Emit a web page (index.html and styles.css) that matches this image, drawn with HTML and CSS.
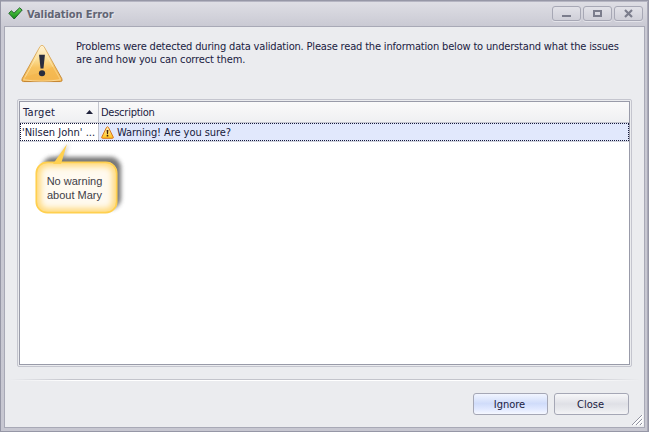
FILE: index.html
```html
<!DOCTYPE html>
<html lang="en">
<head>
<meta charset="utf-8">
<title>Validation Error</title>
<link rel="stylesheet" href="styles.css">
</head>
<body>
<div class="window">
  <header class="titlebar">
    <svg class="check" width="15" height="13" viewBox="0 0 15 13">
      <defs><linearGradient id="green" x2="0" y2="1"><stop offset="0" stop-color="#65d552"/><stop offset="1" stop-color="#118a16"/></linearGradient></defs>
      <path d="M.8 6.300 3.400 3.800 6 6.200 11.600.8 14.200 3 6.200 12Z" fill="url(#green)" stroke="#20632a" stroke-width="1" stroke-linejoin="round"/>
    </svg>
    <h1 class="title">Validation Error</h1>
    <div class="controls">
      <span class="control"><svg width="27" height="13"><path d="M9 8h9v2H9z" fill="#7b7d8c"/></svg></span>
      <span class="control"><svg width="27" height="13"><path d="M10 4h7v5h-7z" fill="none" stroke="#7b7d8c" stroke-width="2"/></svg></span>
      <span class="control"><svg width="27" height="13"><path d="m10 3 7 7m0-7-7 7" fill="none" stroke="#7b7d8c" stroke-width="2.200"/></svg></span>
    </div>
  </header>
  <main class="panel">
    <section class="message">
      <svg class="alert" width="44" height="40" viewBox="0 0 44 41">
        <defs>
          <linearGradient id="amber" x2="0" y2="1"><stop offset="0" stop-color="#fff6df"/><stop offset=".4" stop-color="#fbdd93"/><stop offset=".62" stop-color="#f7c360"/><stop offset="1" stop-color="#f4b956"/></linearGradient>
          <linearGradient id="rim" x2="0" y2="1"><stop offset="0" stop-color="#e3b86f"/><stop offset="1" stop-color="#c2812b"/></linearGradient>
        </defs>
        <path d="M20 2.500Q22 0 24 2.500L42.300 35.500Q43.500 38.300 41 38.500H3Q.5 38.300 1.700 35.500Z" fill="url(#amber)" stroke="url(#rim)"/>
        <path d="M22 3.200 40.800 36.500Q22 40 3.200 36.500Z" fill="none" stroke="#ffeab9" stroke-opacity=".65"/>
        <path d="M3 34Q16 31 34 23L41 36.500H2Z" fill="#f3ae40" fill-opacity=".35"/>
        <path d="M19 11h6l-1.500 14h-3Z" fill="#292d3e"/><ellipse cx="22" cy="30" rx="3.200" ry="3" fill="#292d3e"/>
      </svg>
      <p class="message-text"><span class="line first">Problems were detected during data validation. Please read the information below to understand what the issues</span><span class="line second">are and how you can correct them.</span></p>
    </section>
    <section class="grid-frame">
      <div class="grid">
        <div class="row head">
          <div class="cell target"><span class="t-target">Target</span><svg class="sort" width="7" height="4"><path d="M3.500 0 7 4H0Z" fill="#20223b"/></svg></div>
          <div class="cell"><span class="t-desc">Description</span></div>
        </div>
        <div class="row record">
          <div class="cell target"><span class="t-name">'Nilsen John' ...</span></div>
          <div class="cell selected">
            <svg class="small-alert" width="13" height="13" viewBox="0 0 13 13"><defs><linearGradient id="gold" x2="0" y2="1"><stop offset="0" stop-color="#fff4b0"/><stop offset="1" stop-color="#ffc21a"/></linearGradient></defs><path d="M6.500.8Q7.200.8 7.600 1.700L12.200 11Q12.600 12.300 11.500 12.300H1.500Q.4 12.300.8 11L5.400 1.700Q5.800.8 6.500.8Z" fill="url(#gold)" stroke="#d9731c"/><path d="M5.600 4h1.800l-.4 4.200H6Z M5.700 9h1.600v1.600H5.700Z" fill="#43200e"/></svg>
            <span class="t-warn">Warning! Are you sure?</span>
          </div>
          <svg class="focus" width="609" height="18"><path d="M0 .5h609M0 17.500h609M.5 1v17M608.500 1v17" fill="none" stroke="#17193a" stroke-dasharray="1 1"/></svg>
        </div>
      </div>
    </section>
    <div class="separator"></div>
    <footer class="actions">
      <button class="button primary"><span class="t-ignore">Ignore</span></button>
      <button class="button"><span class="t-close">Close</span></button>
    </footer>
    <svg class="grip" width="12" height="12"><path d="M1 11 11 1M5 11l6-6M9 11l2-2" stroke="#fff" stroke-width="2"/><path d="M0 11 10 1M4 11l6-6M8 11l2-2" stroke="#9092a0" stroke-width="1"/></svg>
  </main>
  <div class="callout">
    <svg width="100" height="88" viewBox="0 0 100 88">
      <defs>
        <filter id="soft" x="-20%" y="-20%" width="140%" height="140%"><feGaussianBlur stdDeviation="1.900"/></filter>
        <filter id="glow"><feGaussianBlur stdDeviation="3"/></filter>
        <clipPath id="bubble"><rect x="6" y="23" width="81" height="51" rx="11"/></clipPath>
      </defs>
      <rect x="12" y="18" width="79" height="52" rx="11" fill="#555" opacity=".8" filter="url(#soft)"/>
      <path d="M25 22 39 4 33 23Z" fill="#777" opacity=".5" filter="url(#soft)"/>
      <rect x="6" y="23" width="81" height="51" rx="11" fill="#fffaf0"/>
      <g clip-path="url(#bubble)"><rect x="6" y="23" width="81" height="51" rx="11" fill="none" stroke="#ffd877" stroke-width="9" filter="url(#glow)"/></g>
      <rect x="6.300" y="23.300" width="80.400" height="50.400" rx="11" fill="none" stroke="#ffd04f" stroke-width="1.700"/>
      <path d="M23 25 37 5 31 25Z" fill="#ffd04f"/>
    </svg>
    <div class="callout-text"><span class="c-one">No warning</span><span class="c-two">about Mary</span></div>
  </div>
</div>
</body>
</html>
```
FILE: styles.css
```css
* { box-sizing: border-box; }
body { margin: 0; font: 11px/13px "DejaVu Sans Condensed", "DejaVu Sans", sans-serif; font-stretch: condensed; color: #20213f; }
.window { position: relative; width: 649px; height: 432px; padding: 0 3px 3px; border: 1px solid #9697a6; background: linear-gradient(#dfdfe5 0, #c9c9d3 26px, #c7c7d1 100%); box-shadow: inset 0 1px #b5b5c2, inset -1px 0 #a9a9b7; }
.titlebar { display: flex; align-items: flex-start; height: 25px; padding: 5px 2px 0 4px; }
.check { margin-top: 1px; }
.title { margin: 2px 0 0 4px; font: bold 11px/14px "DejaVu Sans Condensed", "DejaVu Sans", sans-serif; font-stretch: condensed; color: #626574; text-shadow: 1px 1px #e8e8ee; white-space: nowrap; letter-spacing: -.08px; }
.controls { display: flex; gap: 2px; margin-left: auto; }
.control { width: 29px; height: 15px; border: 1px solid #a7a8b5; border-radius: 3px; background: linear-gradient(#e2e2e8, #cfcfd8); box-shadow: 0 1px #e3e3e9; }
.control svg { display: block; }
.panel { position: relative; width: 641px; height: 402px; padding: 0 12px; border: 1px solid #a8a9b6; background: #ebecef; }
.message { display: flex; height: 72px; padding: 13px 0 0 3px; }
.alert { flex: none; margin-top: 4px; }
.message-text { margin: 0 0 0 12px; }
.line { display: block; white-space: nowrap; letter-spacing: -.172px; }
.second { letter-spacing: -.13px; }
.grid-frame { width: 615px; height: 268px; padding: 1px; border: 1px solid #c4c5ce; border-radius: 2px; }
.grid { width: 611px; height: 264px; border: 1px solid #999ba9; background: #fff; }
.row { display: grid; grid-template-columns: 79px 1fr; }
.head { height: 21px; background: linear-gradient(#fafafa, #eff0f2); border-bottom: 1px solid #c4c6cf; }
.cell { display: flex; align-items: center; padding-left: 2px; white-space: nowrap; }
.target { border-right: 1px solid #c4c6cf; justify-content: space-between; padding-right: 5px; }
.t-target { margin-left: 1px; letter-spacing: .3px; }
.t-desc { letter-spacing: -.25px; }
.t-warn { letter-spacing: -.07px; }
.record { position: relative; height: 19px; border-bottom: 1px solid #d2d5de; color: #17193a; }
.record .target { padding-right: 0; }
.selected { background: #e1e8fc; gap: 3px; padding-left: 3px; }
.small-alert { margin-left: -1px; }
.focus { position: absolute; inset: 0; }
.separator { height: 2px; margin: 12px -8px 0; background: linear-gradient(90deg, transparent, #c3c4cb 10%, #c3c4cb 90%, transparent) top / 100% 1px no-repeat, linear-gradient(90deg, transparent, #fff 10%, #fff 90%, transparent) bottom / 100% 1px no-repeat; }
.actions { display: flex; justify-content: flex-end; gap: 6px; padding: 12px 3px 0 0; }
.button { width: 75px; height: 22px; padding: 0 2px 0 0; border: 1px solid #a5a7b5; border-radius: 3px; background: linear-gradient(#f7f7f9, #dfe0e6 50%, #e8e9ed 75%, #f4f4f6); font: inherit; color: inherit; }
.primary { background: linear-gradient(#f1f5ff, #d0dcfa 48%, #e1e9ff 75%, #f6f8ff); }
.grip { position: absolute; right: 0; bottom: 1px; }
.callout { position: absolute; left: 29px; top: 138px; width: 100px; height: 88px; }
.callout svg { display: block; }
.callout-text { position: absolute; left: 4px; top: 35px; width: 81px; display: grid; justify-items: center; font: 11px/14px "Liberation Sans", Arial, sans-serif; color: #414047; white-space: nowrap; }
```
